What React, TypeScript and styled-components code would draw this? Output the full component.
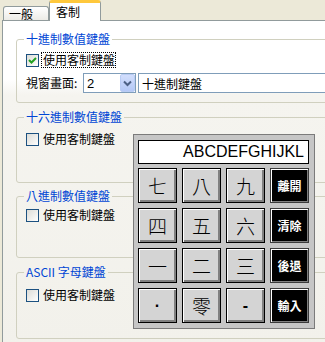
import React from "react";
import styled, { createGlobalStyle, css } from "styled-components";

const Global = createGlobalStyle`
  html, body { margin: 0; padding: 0; overflow: hidden; background: #ECE9D8; }
  body { font-family: "Noto Sans CJK TC", "Liberation Sans", sans-serif; font-size: 12px; color: #000; }
  * { box-sizing: border-box; }
`;

const Window = styled.div`
  position: relative;
  width: 325px;
  height: 342px;
  overflow: hidden;
  background: #ece9d8;
`;

const TabBar = styled.div`
  display: flex;
  align-items: flex-end;
  height: 20px;
  padding-left: 3px;
`;

const Tab = styled.div<{ $active?: boolean }>`
  display: flex;
  align-items: center;
  font-size: 12px;
  line-height: 14px;
  border: 1px solid #919b9c;
  border-bottom: none;
  border-radius: 3px 3px 0 0;
  ${(p) =>
    p.$active
      ? css`
          width: 52px;
          height: 21px;
          margin-bottom: -1px;
          position: relative;
          z-index: 1;
          background: #fff;
          border-top: 3px solid #ffc83c;
          padding: 0 0 1px 6px;
        `
      : css`
          width: 46px;
          height: 14px;
          background: linear-gradient(#ffffff, #ecebe6);
          padding: 0 0 0 5px;
        `}
`;

const Panel = styled.div`
  margin-left: 2px;
  width: 340px;
  height: 330px;
  border: 1px solid #919b9c;
  background: linear-gradient(
    to bottom,
    #ffffff 0,
    #ffffff 58px,
    #f5f4ef 74px,
    #f2f1eb 100%
  );
  padding: 11px 0 0 13px;
  display: flex;
  flex-direction: column;
`;

const Group = styled.fieldset<{ $h: number; $pt: number; $mt: number }>`
  margin: ${(p) => p.$mt}px 0 0 0;
  width: 330px;
  min-width: 0;
  height: ${(p) => p.$h}px;
  border: 1px solid #d0d0bf;
  border-radius: 3px;
  padding: ${(p) => p.$pt}px 0 0 9px;
`;

const Legend = styled.legend`
  padding: 0 2px;
  margin-left: -2px;
  color: #0046d5;
  font-size: 12px;
  line-height: 14px;
`;

const CheckRow = styled.div`
  display: flex;
  align-items: center;
  height: 16px;
`;

const Box = styled.span`
  width: 13px;
  height: 13px;
  border: 1px solid #1c5180;
  background: linear-gradient(135deg, #dcdcd7 0%, #f4f4f2 70%, #ffffff 100%);
  margin-right: 2px;
  display: flex;
  align-items: center;
  justify-content: center;
`;

const CheckLabel = styled.span<{ $focus?: boolean }>`
  border: 1px dotted ${(p) => (p.$focus ? "#000" : "transparent")};
  padding: 0 0 0 1px;
  line-height: 14px;
  font-size: 12px;
`;

const FieldRow = styled.div`
  display: flex;
  align-items: center;
  height: 20px;
  margin-top: 5px;
`;

const FieldLabel = styled.span`
  width: 57px;
  font-size: 12px;
  line-height: 14px;
`;

const Select = styled.div`
  width: 53px;
  height: 20px;
  border: 1px solid #7f9db9;
  background: #fff;
  display: flex;
  align-items: center;
  justify-content: space-between;
  padding-left: 3px;
  font-family: "Liberation Sans", sans-serif;
  font-size: 13px;
`;

const DropButton = styled.span`
  width: 15px;
  height: 18px;
  border: 1px solid #b9ccf4;
  border-radius: 2px;
  background: linear-gradient(#d2defc, #b4c8f6);
  display: flex;
  align-items: center;
  justify-content: center;
`;

const TextInput = styled.div`
  margin-left: 2px;
  width: 200px;
  height: 20px;
  border: 1px solid #7f9db9;
  background: #fff;
  padding-left: 3px;
  display: flex;
  align-items: center;
  font-size: 12px;
`;

const Keypad = styled.div`
  position: absolute;
  left: 133px;
  top: 134px;
  width: 182px;
  height: 195px;
  border: 1px solid #7b7b7b;
  background: #c6c6c6;
  padding: 5px 4px;
  display: flex;
  flex-direction: column;
  gap: 4px;
`;

const Display = styled.div`
  width: 171px;
  height: 24px;
  border: 1px solid #000;
  background: #fff;
  font-family: "Liberation Sans", sans-serif;
  font-size: 16px;
  line-height: 22px;
  text-align: right;
  padding-right: 4px;
`;

const Keys = styled.div`
  display: grid;
  grid-template-columns: repeat(4, 39px);
  grid-auto-rows: 35px;
  gap: 5px;
`;

const Key = styled.div<{ $dark?: boolean; $sym?: boolean }>`
  display: flex;
  align-items: center;
  justify-content: center;
  border: 1px solid #000;
  ${(p) =>
    p.$dark
      ? css`
          background: #000;
          color: #fff;
          font-size: 12px;
          font-weight: 700;
          border-color: #3a3a3a;
          box-shadow: inset 1px 1px 0 #ffffff, inset -1px -1px 0 #808080;
        `
      : css`
          background: #d4d4d4;
          color: #000;
          font-size: 19px;
          font-weight: 300;
          box-shadow: inset 1px 1px 0 #ffffff, inset -2px -2px 0 #808080;
        `}
  ${(p) =>
    p.$sym &&
    css`
      font-family: "Liberation Sans", sans-serif;
      font-size: 16px;
      font-weight: 700;
    `}
`;

const Check = () => (
  <svg width="9" height="9" viewBox="0 0 9 9">
    <path d="M1 4 L3.5 6.5 L8 2" fill="none" stroke="#21a121" strokeWidth="2" />
  </svg>
);

const Chevron = () => (
  <svg width="9" height="7" viewBox="0 0 9 7">
    <path d="M1 1.5 L4.5 5 L8 1.5" fill="none" stroke="#4d6185" strokeWidth="2" />
  </svg>
);

const groups = [
  { title: "十六進制數值鍵盤", h: 73, pt: 7, mt: 7 },
  { title: "八進制數值鍵盤", h: 69, pt: 4, mt: 6 },
  { title: "ASCII 字母鍵盤", h: 74, pt: 8, mt: 7 },
];

const keys: { label: string; dark?: boolean; sym?: boolean }[] = [
  { label: "七" },
  { label: "八" },
  { label: "九" },
  { label: "離開", dark: true },
  { label: "四" },
  { label: "五" },
  { label: "六" },
  { label: "清除", dark: true },
  { label: "一" },
  { label: "二" },
  { label: "三" },
  { label: "後退", dark: true },
  { label: "·", sym: true },
  { label: "零" },
  { label: "-", sym: true },
  { label: "輸入", dark: true },
];

export default function App() {
  return (
    <Window>
      <Global />
      <TabBar>
        <Tab>一般</Tab>
        <Tab $active>客制</Tab>
      </TabBar>
      <Panel>
        <Group $h={71} $pt={6} $mt={0}>
          <Legend>十進制數值鍵盤</Legend>
          <CheckRow>
            <Box>
              <Check />
            </Box>
            <CheckLabel $focus>使用客制鍵盤</CheckLabel>
          </CheckRow>
          <FieldRow>
            <FieldLabel>視窗畫面:</FieldLabel>
            <Select>
              2
              <DropButton>
                <Chevron />
              </DropButton>
            </Select>
            <TextInput>十進制鍵盤</TextInput>
          </FieldRow>
        </Group>
        {groups.map((g) => (
          <Group key={g.title} $h={g.h} $pt={g.pt} $mt={g.mt}>
            <Legend>{g.title}</Legend>
            <CheckRow>
              <Box />
              <CheckLabel>使用客制鍵盤</CheckLabel>
            </CheckRow>
          </Group>
        ))}
      </Panel>
      <Keypad>
        <Display>ABCDEFGHIJKL</Display>
        <Keys>
          {keys.map((k, i) => (
            <Key key={i} $dark={k.dark} $sym={k.sym}>
              {k.label}
            </Key>
          ))}
        </Keys>
      </Keypad>
    </Window>
  );
}
